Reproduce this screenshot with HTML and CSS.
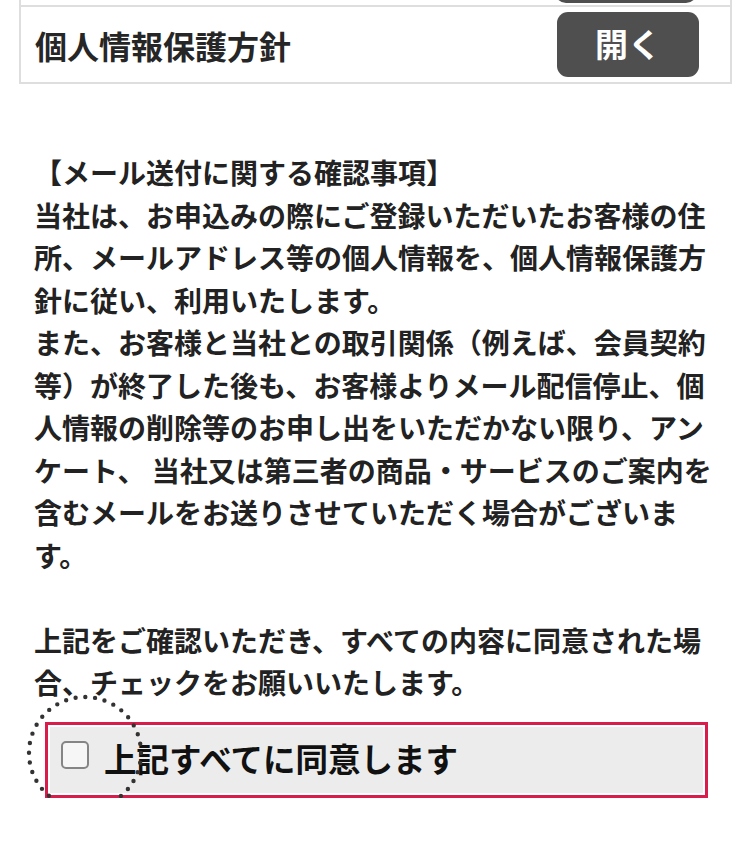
FILE: index.html
```html
<!DOCTYPE html>
<html lang="ja">
<head>
<meta charset="utf-8">
<title>個人情報保護方針</title>
<link rel="stylesheet" href="styles.css">
</head>
<body>
<div class="card">
  <div class="prev-row">
    <span class="open-btn prev-btn"></span>
  </div>
  <div class="row">
    <span class="row-title">個人情報保護方針</span>
    <span class="open-btn">開く</span>
  </div>
</div>

<div class="notice">
  <p class="para">【メール送付に関する確認事項】<br>当社は、お申込みの際にご登録いただいたお客様の住<br>所、メールアドレス等の個人情報を、個人情報保護方<br>針に従い、利用いたします。<br>また、お客様と当社との取引関係（例えば、会員契約<br>等）が終了した後も、お客様よりメール配信停止、個<br>人情報の削除等のお申し出をいただかない限り、アン<br>ケート、 当社又は第三者の商品・サービスのご案内を<br>含むメールをお送りさせていただく場合がございま<br>す。</p>
  <p class="para">上記をご確認いただき、すべての内容に同意された場<br>合、チェックをお願いいたします。</p>
</div>

<label class="agree">
  <span class="check"></span>
  <span class="agree-text">上記すべてに同意します</span>
  <svg class="ring" width="120" height="120" viewBox="0 0 120 120" aria-hidden="true">
    <circle cx="60" cy="60" r="56" fill="none" stroke="#333333" stroke-width="4.4" stroke-linecap="round" stroke-dasharray="0 9.77"/>
  </svg>
</label>
</body>
</html>
```

FILE: styles.css
```css
* { box-sizing: border-box; }

html, body {
  margin: 0;
  padding: 0;
  background: #ffffff;
}

body {
  font-family: "Noto Sans CJK JP", "Noto Sans", sans-serif;
  font-weight: 700;
  color: #222222;
}

.card {
  margin: 0 18px 0 19px;
  border-left: 2px solid #dedede;
  border-right: 2px solid #dedede;
  border-bottom: 2px solid #dedede;
}

.prev-row {
  height: 5px;
  overflow: hidden;
  display: flex;
  justify-content: flex-end;
  padding-right: 33px;
}

.prev-btn {
  margin-top: -62px;
  width: 134px;
}

.row {
  border-top: 2px solid #dedede;
  display: flex;
  align-items: center;
  justify-content: space-between;
  padding: 5px 31px 5px 14px;
}

.row-title {
  font-size: 32px;
  line-height: 40px;
  color: #262626;
  letter-spacing: 0;
}

.open-btn {
  flex: none;
  display: flex;
  align-items: center;
  justify-content: center;
  width: 142px;
  height: 65px;
  border-radius: 11px;
  background: #4f4f4f;
  color: #ffffff;
  font-size: 33px;
  line-height: 1;
  padding-bottom: 2px;
}

.notice {
  margin-top: 67px;
  padding: 0 20px 0 34px;
}

.para {
  margin: 0 0 42.5px;
  font-size: 28px;
  line-height: 42.5px;
  white-space: nowrap;
}

.para:last-child {
  margin-bottom: 0;
}

.agree {
  position: relative;
  display: flex;
  align-items: center;
  margin: 18px 42px 0 45px;
  height: 76px;
  border: 3px solid #d81d4d;
  background: #ececec;
  box-shadow: inset 0 0 0 2px #ffffff;
  padding-left: 13px;
}

.check {
  flex: none;
  width: 28px;
  height: 28px;
  border: 2px solid #858585;
  border-radius: 5px;
  background: #f6f6f6;
  margin-bottom: 10px;
}

.agree-text {
  margin-left: 15px;
  font-size: 32.5px;
  line-height: 40px;
  color: #111111;
  margin-bottom: 4px;
}

.ring {
  position: absolute;
  left: -23px;
  top: -32px;
  pointer-events: none;
}
```
